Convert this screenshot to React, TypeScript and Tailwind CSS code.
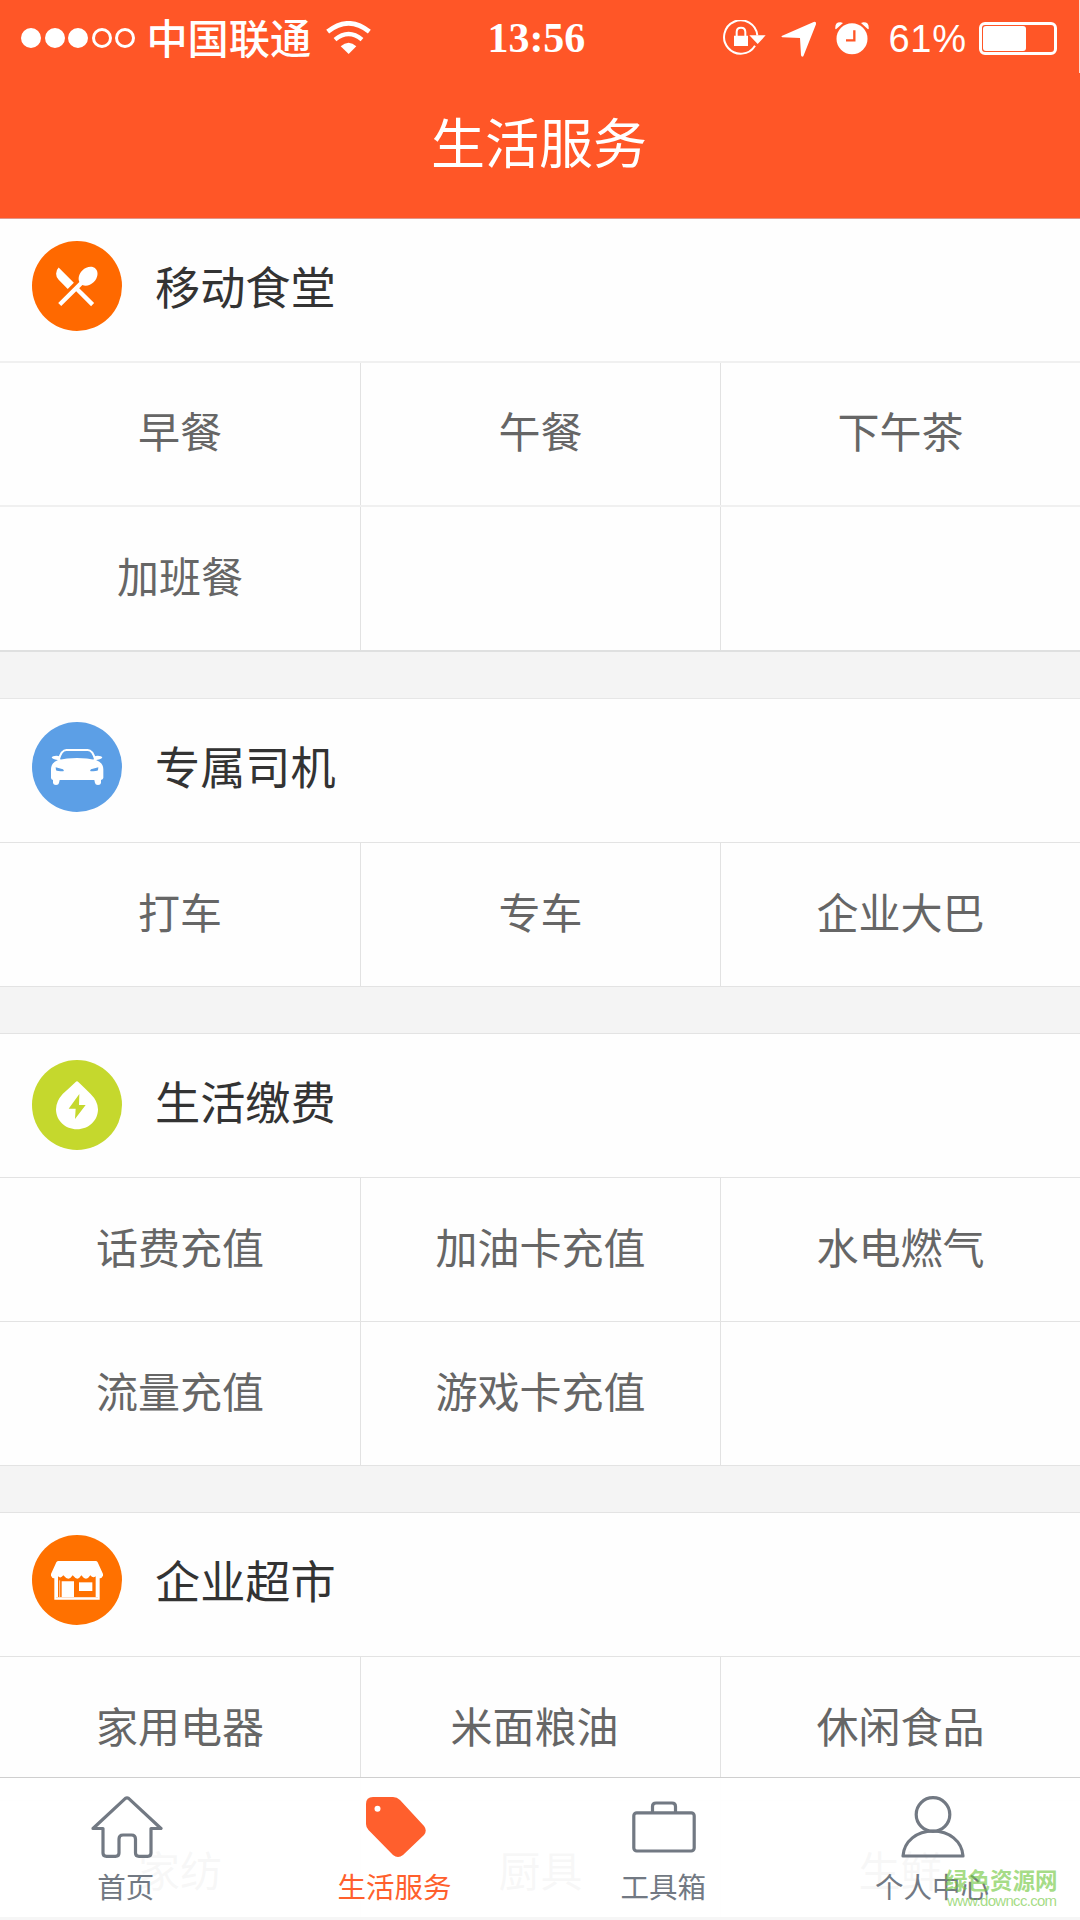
import React from "react";

const CJK = "font-['Noto_Sans_CJK_SC',sans-serif]";

function Badge({ color, children }: { color: string; children: React.ReactNode }) {
  return (
    <svg className="size-[90px] shrink-0" viewBox="0 0 270 270" fill="#fff">
      <circle cx="135" cy="135" r="135" fill={color} />
      {children}
    </svg>
  );
}

const canteenIcon = (
  <Badge color="#ff6900">
    <path
      transform="translate(54.5 57) scale(6.5)"
      d="M8.1 13.34l2.83-2.83L3.91 3.5a4.008 4.008 0 0 0 0 5.66l4.19 4.18zm6.78-1.81c1.53.71 3.68.21 5.27-1.38 1.91-1.91 2.28-4.65.81-6.12-1.46-1.46-4.2-1.1-6.12.81-1.59 1.59-2.09 3.74-1.38 5.27L3.7 19.87l1.41 1.41L12 14.41l6.88 6.88 1.41-1.41L13.41 13l1.47-1.47z"
    />
  </Badge>
);

const carIcon = (
  <Badge color="#5c9fe6">
    <path d="M80 114 Q88 84 103 84 H167 Q182 84 190 114" fill="none" stroke="#fff" strokeWidth="6" />
    <path d="M59 107 Q62 100 80 102 L86 114 Q66 114 59 107Z M211 107 Q208 100 190 102 L184 114 Q204 114 211 107Z" />
    <path d="M78 114 Q104 108 135 108 Q166 108 192 114 Q214 122 214 142 V168 Q213 173 207 174 V183 Q206 189 198 189 Q190 189 189 183 L187 174 H83 L81 183 Q80 189 72 189 Q64 189 63 183 V174 Q57 172 57 167 V142 Q57 122 78 114Z" />
    <path d="M71 136 L93 142 Q98 147 94 148 Q76 148 72 145Z M199 136 L177 142 Q172 147 176 148 Q194 148 198 145Z" fill="#5c9fe6" />
  </Badge>
);

const billsIcon = (
  <Badge color="#c5d82d">
    <path d="M131 66 Q135 62 139 66 Q158 84 176 102 Q198 124 198 148 C198 182 170 208 135 208 C100 208 72 182 72 148 Q72 124 92 102 Q112 84 131 66Z" />
    <path d="M142 102 L110 146 H131 L129 177 L161 135 H141Z" fill="#c5d82d" />
  </Badge>
);

const storeIcon = (
  <Badge color="#ff7100">
    <path d="M80 78 H191 Q195 78 197 82 L213 117 V122 Q208 131 203 130 V194 H67 V130 Q61 131 57 122 V117 L73 82 Q75 78 80 78Z" />
    <path d="M78 186 V124 Q86 132 94 121 Q102 131 109 131 Q116 131 122 121 Q130 131 136 131 Q142 131 148 121 Q155 131 162 131 Q169 131 175 121 Q183 131 191 124 V186 H126 V139 H89 V186Z" fill="#ff7100" />
    <path d="M141 142 H181 V168 H141Z" />
    <path d="M83 136 V186" stroke="#fff" strokeWidth="2" />
    <path d="M72 188 H198" stroke="#ff7100" strokeWidth="1.5" opacity=".5" />
  </Badge>
);

type SectionData = {
  title: string;
  icon: React.ReactNode;
  head: string;
  heading: string;
  rows: string[][];
  rowBox: string;
};

const sections: SectionData[] = [
  {
    title: "移动食堂",
    icon: canteenIcon,
    head: "h-[144px] pt-[22px] border-b-2 border-[#f0f0f0]",
    heading: "-mt-[22px]",
    rows: [["早餐", "午餐", "下午茶"], ["加班餐", "", ""]],
    rowBox: "h-[144px] border-b-2 border-[#f0f0f0] last:border-[#dfe0e0] last:h-[145px]",
  },
  {
    title: "专属司机",
    icon: carIcon,
    head: "h-[144px] pt-[23px] border-b border-[#e3e3e3]",
    heading: "-mt-[23px]",
    rows: [["打车", "专车", "企业大巴"]],
    rowBox: "h-[144px] border-b border-[#e3e3e3]",
  },
  {
    title: "生活缴费",
    icon: billsIcon,
    head: "h-[144px] pt-[26px] border-b border-[#e3e3e3]",
    heading: "-mt-[26px]",
    rows: [["话费充值", "加油卡充值", "水电燃气"], ["流量充值", "游戏卡充值", ""]],
    rowBox: "h-[144px] border-b border-[#e3e3e3]",
  },
  {
    title: "企业超市",
    icon: storeIcon,
    head: "h-[144px] pt-[22px] border-b border-[#e3e3e3]",
    heading: "-mt-[22px]",
    rows: [["家用电器", "米面粮油", "休闲食品"], ["家纺", "厨具", "生鲜"]],
    rowBox: "h-[144px] border-b border-[#e3e3e3]",
  },
];

const gaps = [
  "h-[47px] border-b border-[#e6e6e6]",
  "h-[47px] border-b border-[#e3e3e3]",
  "h-[47px] border-b border-[#e3e3e3]",
];

function Section({ s }: { s: SectionData }) {
  return (
    <section className="bg-[#fefefe]">
      <div className={"flex items-start pl-8 " + s.head}>
        {s.icon}
        <h2 className={"ml-[33px] h-[130px] text-[45.2px] leading-[134px] text-[#333] " + s.heading}>{s.title}</h2>
      </div>
      {s.rows.map((row, i) => (
        <div key={i} className={"grid grid-cols-[361px_360px_359px] " + s.rowBox}>
          {row.map((label, j) => (
            <div
              key={j}
              className={
                "flex items-center justify-center border-r border-[#e2e2e2] pb-2 text-[42px] leading-none text-[#666] last:border-r-0 " +
                (label === "米面粮油" ? "pr-3" : "")
              }
            >
              {label}
            </div>
          ))}
        </div>
      ))}
    </section>
  );
}

function StatusBar() {
  return (
    <div className="flex h-[76px] items-start pl-[21px] text-white">
      <div className="mt-[28px] flex gap-[3.6px]">
        {[1, 1, 1, 0, 0].map((on, i) => (
          <span key={i} className={"size-5 rounded-full border-[3px] border-white " + (on ? "bg-white" : "")} />
        ))}
      </div>
      <span className="ml-[11px] mt-[16px] w-[166px] whitespace-nowrap text-[41.2px] font-medium leading-[40px]">
        中国联通
      </span>
      <svg className="ml-[14px] mt-[21px] h-[34px] w-[45px] shrink-0" viewBox="0 0 135 102" fill="none" stroke="#fff">
        <path d="M5 32 Q68 -18 130 32" strokeWidth="14" />
        <path d="M27 56 Q68 22 108 56" strokeWidth="13" />
        <path d="M44 76 Q68 55 91 76 L68 99Z" fill="#fff" stroke="none" />
      </svg>
      <span className="ml-[116px] mt-[17px] w-[100px] font-['Liberation_Serif',serif] text-[42px] font-bold leading-[42px]">
        13:56
      </span>
      <svg className="ml-[136px] mt-[20px] h-[36px] w-[43px] shrink-0" viewBox="0 0 129 108" fill="none" stroke="#fff">
        <path d="M96 77 A50 50 0 1 1 103 46" strokeWidth="6" />
        <path d="M79 46 H128 L104 72Z M33 47 H75 V78 H33Z" fill="#fff" stroke="none" />
        <path d="M41 50 V36 Q41 23 54 23 Q67 23 67 36 V50" strokeWidth="6" />
      </svg>
      <svg className="ml-[15px] mt-[21px] h-[37px] w-[36px] shrink-0" viewBox="0 0 108 111" fill="#fff">
        <path d="M2 45 L98 3 Q107 0 105 10 L67 106 Q62 110 60 103 L57 51 L4 49 Q0 47 2 45Z" />
      </svg>
      <svg className="ml-[18px] mt-[22px] h-[33px] w-[34px] shrink-0" viewBox="0 0 102 99" fill="#fff">
        <circle cx="51" cy="50" r="46.5" />
        <path d="M1 21 Q-1 0 17 1 L24 3 L3 22Z M101 21 Q103 0 85 1 L78 3 L99 22Z" />
        <path d="M58 25 V55 H33" fill="none" stroke="#ff5627" strokeWidth="7" />
      </svg>
      <span className="ml-[19px] mt-[20px] w-[80px] font-['Liberation_Sans',sans-serif] text-[38px] leading-[38px] tracking-[0.8px]">
        61%
      </span>
      <div className="ml-[11px] mt-[22px] h-[33px] w-[78px] rounded-[6px] border-[3px] border-white p-px">
        <div className="h-full w-[43px] rounded-[3px] bg-white" />
      </div>
      <div className="ml-auto h-[73px] w-px bg-white/80" />
    </div>
  );
}

const tabs = [
  {
    label: "首页",
    color: "text-[#727983]",
    icon: (
      <svg className="ml-px h-[62px] w-[72px]" viewBox="0 0 72 62" fill="none" stroke="currentColor" strokeWidth="3.2" strokeLinejoin="round">
        <path d="M34.4 2.4 Q36 1.2 37.6 2.4 L70 32.5 H60 V57 Q60 60.3 56.7 60.3 H48 Q44.5 60.3 44.5 57 V43 Q44.5 39 40.5 39 H32 Q28 39 28 43 V57 Q28 60.3 24.5 60.3 H15.5 Q12 60.3 12 57 V32.5 H2Z" />
      </svg>
    ),
  },
  {
    label: "生活服务",
    color: "text-[#ff5f2d]",
    icon: (
      <svg className="ml-px h-[62px] w-[60px]" viewBox="0 0 60 62" fill="currentColor">
        <path d="M7 1 H27 Q31 1 34 4 L58 30 Q61.5 34.5 58 39 L37 59 Q32 63 27 59 L2.5 34 Q0 31.5 0 28 V8 Q0 1 7 1Z" />
        <circle cx="11.5" cy="12.7" r="3" fill="#fff" />
      </svg>
    ),
  },
  {
    label: "工具箱",
    color: "text-[#727983]",
    icon: (
      <svg className="h-[62px] w-[64px]" viewBox="0 0 64 62" fill="none" stroke="currentColor" strokeWidth="3.2">
        <rect x="1.8" y="16.8" width="60.4" height="38.2" rx="3" />
        <path d="M20.5 16.5 V10.5 Q20.5 7 24 7 H40 Q43.5 7 43.5 10.5 V16.5" />
      </svg>
    ),
  },
  {
    label: "个人中心",
    color: "text-[#727983]",
    icon: (
      <svg className="h-[62px] w-[64px]" viewBox="0 0 64 62" fill="none" stroke="currentColor" strokeWidth="3.2">
        <circle cx="32" cy="18.5" r="16.8" />
        <path d="M2 60 C3 45 16 35 32 35 C48 35 61 45 62 60Z" strokeLinejoin="round" />
      </svg>
    ),
  },
];

export default function App() {
  return (
    <div className={"relative h-[1920px] w-[1080px] overflow-hidden bg-[#f4f4f4] " + CJK}>
      <header className="h-[219px] border-b border-[#e0968a] bg-[#ff5627]">
        <StatusBar />
        <h1 className="text-center text-[54px] font-normal leading-[130px] text-white">
          <span className="relative -left-px">生活服务</span>
        </h1>
      </header>
      {sections.map((s, i) => (
        <React.Fragment key={s.title}>
          <Section s={s} />
          {i < 3 && <div className={gaps[i]} />}
        </React.Fragment>
      ))}
      <nav className="absolute inset-x-0 bottom-0 h-[143px] border-t border-[#cfcfcf] bg-white/95">
        <div className="-ml-2 mr-[13px] grid grid-cols-4 pt-[18px]">
          {tabs.map((t) => (
            <div key={t.label} className={"flex flex-col items-center " + t.color}>
              {t.icon}
              <span className="mt-[12px] pr-px text-[28.5px] leading-[32px]">{t.label}</span>
            </div>
          ))}
        </div>
        <div className="absolute inset-x-0 bottom-0 h-[3px] bg-[#f6f6f6]" />
      </nav>
      <div className="absolute left-[945px] top-[1867px] w-[115px] text-[#72c840]/65">
        <div className="whitespace-nowrap text-[22.5px] font-bold leading-[24px]">绿色资源网</div>
        <div className="mt-px whitespace-nowrap pl-[2px] font-['Liberation_Sans',sans-serif] text-[15px] leading-[17px] tracking-[-0.7px]">
          www.downcc.com
        </div>
      </div>
    </div>
  );
}
